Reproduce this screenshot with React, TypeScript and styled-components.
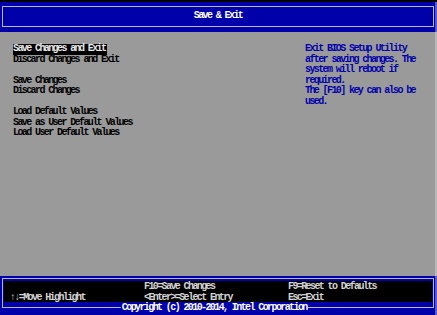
import React from "react";
import styled, { createGlobalStyle } from "styled-components";

const GlobalStyle = createGlobalStyle`
  html, body {
    margin: 0;
    padding: 0;
    background: #9a9a9a;
  }
  * {
    box-sizing: border-box;
  }
`;

const BIOS_BLUE = "#0000aa";
const BORDER = "#b8b8c8";

const Screen = styled.div`
  width: 437px;
  height: 315px;
  display: flex;
  flex-direction: column;
  overflow: hidden;
  font-family: "Liberation Mono", "DejaVu Sans Mono", monospace;
  font-weight: bold;
  font-size: 10px;
  letter-spacing: -1.6px;
  line-height: 10.5px;
`;

const Header = styled.header`
  flex: none;
  height: 32px;
  border-top: 2px solid #000;
  background: ${BIOS_BLUE};
  padding: 4px 3px 0 2px;
  box-shadow: inset -2px 0 0 rgba(255, 255, 255, 0.35);
`;

const TitleBox = styled.div`
  height: 21px;
  border: 1px solid ${BORDER};
  display: flex;
  align-items: center;
  justify-content: center;
  color: #ffffff;
`;

const Body = styled.main`
  flex: 1;
  display: flex;
  padding: 12px 0 0 13px;
  background: #9a9a9a;
  box-shadow: inset -2px 0 0 rgba(255, 255, 255, 0.3);
`;

const MenuList = styled.div`
  width: 292px;
  display: flex;
  flex-direction: column;
  align-items: flex-start;
`;

const MenuItem = styled.div<{ $selected?: boolean; $gapBefore?: boolean }>`
  height: 10.5px;
  margin-top: ${(p) => (p.$gapBefore ? "10.5px" : "0")};
  padding-right: 2px;
  color: ${(p) => (p.$selected ? "#e8e8e8" : "#000")};
  background: ${(p) => (p.$selected ? "#000" : "transparent")};
  white-space: pre;
`;

const HelpText = styled.div`
  width: 130px;
  color: ${BIOS_BLUE};
  white-space: pre;
`;

const Footer = styled.footer`
  flex: none;
  height: 39px;
  background: ${BIOS_BLUE};
  padding: 2px 3px 0 2px;
  box-shadow: inset -2px 0 0 rgba(255, 255, 255, 0.35);
`;

const KeyBox = styled.div`
  position: relative;
  height: 30px;
  border: 1px solid ${BORDER};
  padding: 2px 1px 5px 1px;
`;

const KeyPanel = styled.div`
  height: 21px;
  background: #000;
  display: grid;
  grid-template-columns: 134px 144px 1fr;
  grid-template-rows: 10.5px 10.5px;
  padding: 1px 0 0 6px;
  color: #d4d4d4;
  white-space: pre;
`;

const Copyright = styled.div`
  position: absolute;
  left: 50%;
  bottom: -6px;
  transform: translateX(-52%);
  background: ${BIOS_BLUE};
  color: #ffffff;
  padding: 0 1px;
  white-space: pre;
`;

const menu = [
  { label: "Save Changes and Exit", selected: true },
  { label: "Discard Changes and Exit" },
  { label: "Save Changes", gap: true },
  { label: "Discard Changes" },
  { label: "Load Default Values", gap: true },
  { label: "Save as User Default Values" },
  { label: "Load User Default Values" },
];

const help = [
  "Exit BIOS Setup Utility",
  "after saving changes. The",
  "system will reboot if",
  "required.",
  "The [F10] key can also be",
  "used.",
];

export default function App() {
  return (
    <>
      <GlobalStyle />
      <Screen>
        <Header>
          <TitleBox>Save &amp; Exit</TitleBox>
        </Header>
        <Body>
          <MenuList>
            {menu.map((m) => (
              <MenuItem key={m.label} $selected={m.selected} $gapBefore={m.gap}>
                {m.label}
              </MenuItem>
            ))}
          </MenuList>
          <HelpText>{help.join("\n")}</HelpText>
        </Body>
        <Footer>
          <KeyBox>
            <KeyPanel>
              <span />
              <span>F10=Save Changes</span>
              <span>F9=Reset to Defaults</span>
              <span>↑↓=Move Highlight</span>
              <span>&lt;Enter&gt;=Select Entry</span>
              <span>Esc=Exit</span>
            </KeyPanel>
            <Copyright>Copyright (c) 2010-2014, Intel Corporation</Copyright>
          </KeyBox>
        </Footer>
      </Screen>
    </>
  );
}
